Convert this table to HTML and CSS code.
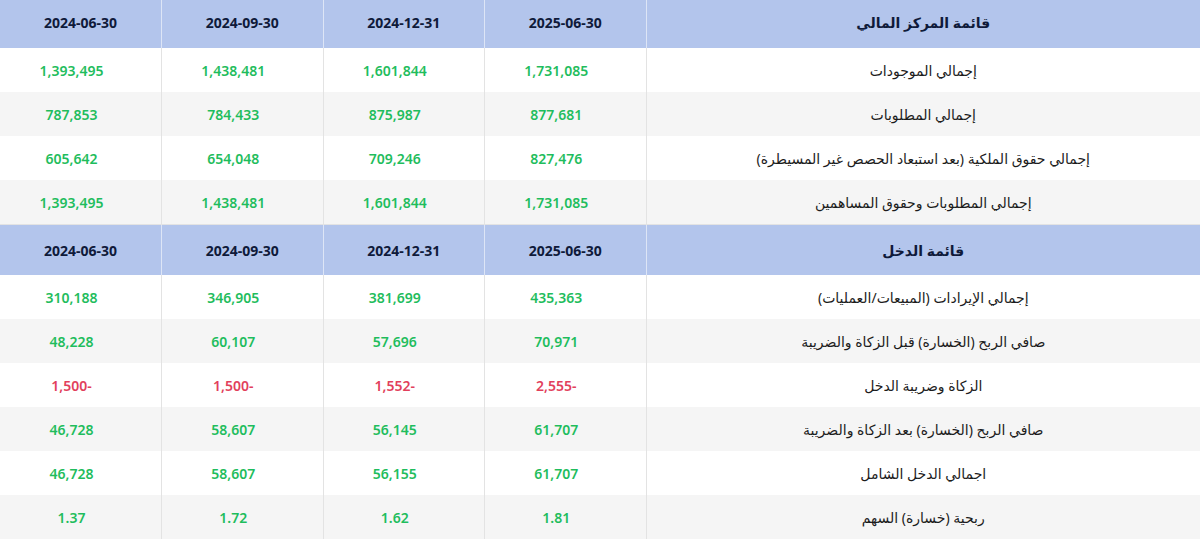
FILE: index.html
```html
<!DOCTYPE html>
<html lang="ar" dir="rtl">
<head>
<meta charset="utf-8">
<title>القوائم المالية</title>
<link rel="stylesheet" href="styles.css">
</head>
<body>
<table class="fin">
  <colgroup>
    <col class="c-label">
    <col class="c-val">
    <col class="c-val">
    <col class="c-val">
    <col class="c-val">
  </colgroup>
  <tbody>
    <tr class="head first">
      <th>قائمة المركز المالي</th>
      <th>2025-06-30</th>
      <th>2024-12-31</th>
      <th>2024-09-30</th>
      <th>2024-06-30</th>
    </tr>
    <tr class="row">
      <td class="label">إجمالي الموجودات</td>
      <td class="num pos">1,731,085</td>
      <td class="num pos">1,601,844</td>
      <td class="num pos">1,438,481</td>
      <td class="num pos">1,393,495</td>
    </tr>
    <tr class="row alt">
      <td class="label">إجمالي المطلوبات</td>
      <td class="num pos">877,681</td>
      <td class="num pos">875,987</td>
      <td class="num pos">784,433</td>
      <td class="num pos">787,853</td>
    </tr>
    <tr class="row">
      <td class="label">إجمالي حقوق الملكية (بعد استبعاد الحصص غير المسيطرة)</td>
      <td class="num pos">827,476</td>
      <td class="num pos">709,246</td>
      <td class="num pos">654,048</td>
      <td class="num pos">605,642</td>
    </tr>
    <tr class="row alt">
      <td class="label">إجمالي المطلوبات وحقوق المساهمين</td>
      <td class="num pos">1,731,085</td>
      <td class="num pos">1,601,844</td>
      <td class="num pos">1,438,481</td>
      <td class="num pos">1,393,495</td>
    </tr>
    <tr class="head second">
      <th>قائمة الدخل</th>
      <th>2025-06-30</th>
      <th>2024-12-31</th>
      <th>2024-09-30</th>
      <th>2024-06-30</th>
    </tr>
    <tr class="row">
      <td class="label">إجمالي الإيرادات (المبيعات/العمليات)</td>
      <td class="num pos">435,363</td>
      <td class="num pos">381,699</td>
      <td class="num pos">346,905</td>
      <td class="num pos">310,188</td>
    </tr>
    <tr class="row alt">
      <td class="label">صافي الربح (الخسارة) قبل الزكاة والضريبة</td>
      <td class="num pos">70,971</td>
      <td class="num pos">57,696</td>
      <td class="num pos">60,107</td>
      <td class="num pos">48,228</td>
    </tr>
    <tr class="row">
      <td class="label">الزكاة وضريبة الدخل</td>
      <td class="num neg"><bdi dir="ltr">2,555-</bdi></td>
      <td class="num neg"><bdi dir="ltr">1,552-</bdi></td>
      <td class="num neg"><bdi dir="ltr">1,500-</bdi></td>
      <td class="num neg"><bdi dir="ltr">1,500-</bdi></td>
    </tr>
    <tr class="row alt">
      <td class="label">صافي الربح (الخسارة) بعد الزكاة والضريبة</td>
      <td class="num pos">61,707</td>
      <td class="num pos">56,145</td>
      <td class="num pos">58,607</td>
      <td class="num pos">46,728</td>
    </tr>
    <tr class="row">
      <td class="label">اجمالي الدخل الشامل</td>
      <td class="num pos">61,707</td>
      <td class="num pos">56,155</td>
      <td class="num pos">58,607</td>
      <td class="num pos">46,728</td>
    </tr>
    <tr class="row alt">
      <td class="label">ربحية (خسارة) السهم</td>
      <td class="num pos">1.81</td>
      <td class="num pos">1.62</td>
      <td class="num pos">1.72</td>
      <td class="num pos">1.37</td>
    </tr>
  </tbody>
</table>
</body>
</html>
```

FILE: styles.css
```css
html, body {
  margin: 0;
  padding: 0;
  background: #ffffff;
}

body {
  font-family: "Noto Sans", "DejaVu Sans", sans-serif;
  overflow: hidden;
}

.fin {
  width: 1200px;
  margin-top: -3px;
  border-collapse: collapse;
  table-layout: fixed;
}

.c-label { width: 554px; }
.c-val { width: 161.5px; }

.fin th,
.fin td {
  padding: 0;
  text-align: center;
  vertical-align: middle;
  border-left: 1px solid #e3e3e3;
}

.fin tr > :last-child {
  border-left: none;
}

.head th {
  background: #b3c5ec;
  color: #0f1a3a;
  font-size: 14px;
  font-weight: 700;
  border-left: 1px solid #dde5f6;
}

.head.first th { height: 51px; }
.head.second th {
  height: 50px;
  border-top: 1px solid #e3e3e3;
}

.row td { height: 44px; }
.row.alt td { background: #f5f5f5; }

.label {
  font-size: 14px;
  color: #1c1c1c;
  font-weight: 400;
}

.num {
  font-size: 14px;
  font-weight: 600;
  padding-right: 18px !important;
}

.pos { color: #1fbd5d; }
.neg { color: #e23f5c; }
```
